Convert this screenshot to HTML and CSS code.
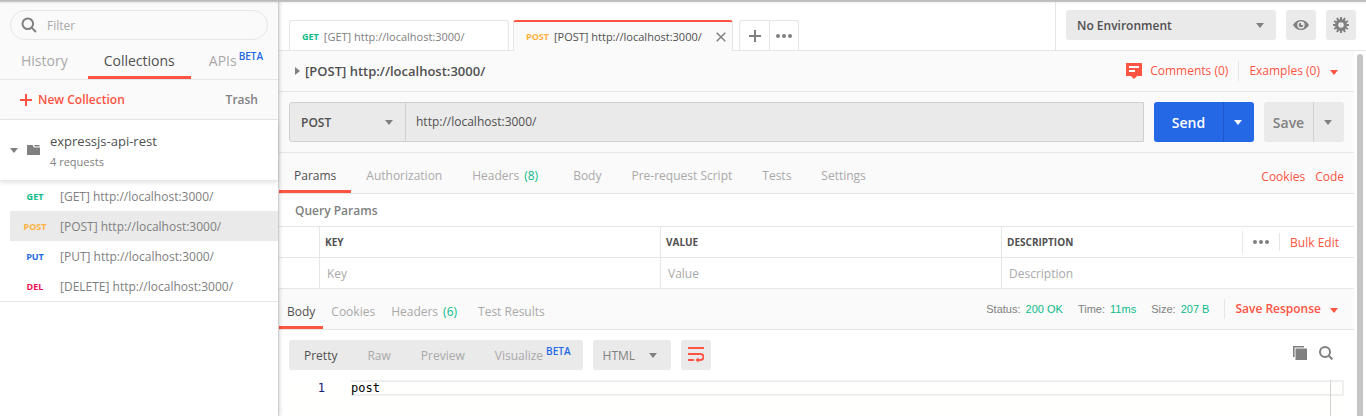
FILE: index.html
```html
<!DOCTYPE html>
<html lang="en">
<head>
<meta charset="utf-8">
<title>[POST] http://localhost:3000/</title>
<link rel="stylesheet" href="styles.css">
</head>
<body>
<div class="app">
  <aside class="sidebar">
    <div class="sidebar-top">
      <label class="filter">
        <svg class="icon" width="16" height="16" viewBox="0 0 16 16" fill="none" stroke="#808080" stroke-width="2"><circle cx="6.8" cy="6.8" r="5.3"/><path d="M10.6 10.6 15 15"/></svg>
        <input type="text" placeholder="Filter" aria-label="Filter">
      </label>
      <nav class="side-tabs">
        <button class="side-tab">History</button>
        <button class="side-tab active">Collections</button>
        <button class="side-tab">APIs<span class="beta">BETA</span></button>
      </nav>
      <div class="side-actions">
        <button class="new-collection">
          <svg width="12" height="12" viewBox="0 0 12 12" stroke="#ff5442" stroke-width="2"><path d="M6 0V12M0 6H12"/></svg>
          New Collection
        </button>
        <button class="trash">Trash</button>
      </div>
    </div>
    <div class="collection">
      <span class="caret"></span>
      <svg class="folder" width="13" height="10" viewBox="0 0 13 10"><path fill="#808080" d="M0 0H5.5L7 2.5H13V10H0Z"/><path fill="#808080" d="M7 0H12.5V1.5H8Z"/></svg>
      <div class="collection-text">
        <div class="collection-name">expressjs-api-rest</div>
        <div class="collection-count">4 requests</div>
      </div>
    </div>
    <ul class="requests">
      <li><a class="request" href="#get"><span class="method get">GET</span><span>[GET] http://localhost:3000/</span></a></li>
      <li><a class="request selected" href="#post"><span class="method post">POST</span><span>[POST] http://localhost:3000/</span></a></li>
      <li><a class="request" href="#put"><span class="method put">PUT</span><span>[PUT] http://localhost:3000/</span></a></li>
      <li><a class="request" href="#delete"><span class="method del">DEL</span><span>[DELETE] http://localhost:3000/</span></a></li>
    </ul>
  </aside>

  <main class="main">
    <header class="header">
      <div class="doc-tabs">
        <button class="doc-tab"><span class="method get">GET</span>[GET] http://localhost:3000/</button>
        <div class="doc-tab active">
          <span class="method post">POST</span><span class="doc-name">[POST] http://localhost:3000/</span>
          <button class="close" aria-label="Close tab"><svg width="10" height="10" viewBox="0 0 10 10" stroke="#808080" stroke-width="1.5"><path d="M.7 .7 9.3 9.3M9.3 .7.7 9.3"/></svg></button>
        </div>
        <div class="tab-buttons">
          <button aria-label="New tab"><svg width="12" height="12" viewBox="0 0 12 12" stroke="#808080" stroke-width="2"><path d="M6 0V12M0 6H12"/></svg></button>
          <button aria-label="Tab options"><svg width="16" height="4" viewBox="0 0 16 4" fill="#808080"><circle cx="2" cy="2" r="2"/><circle cx="8" cy="2" r="2"/><circle cx="14" cy="2" r="2"/></svg></button>
        </div>
      </div>
      <div class="environment">
        <div class="select env-select">
          <select aria-label="Environment"><option>No Environment</option></select>
        </div>
        <button class="icon-button" aria-label="Environment quick look"><svg width="16" height="10" viewBox="0 0 16 10"><path fill="#808080" fill-rule="evenodd" d="M0 5Q3 0 8 0T16 5Q13 10 8 10T0 5ZM8 1.3A3.7 3.7 0 1 0 8 8.7 3.7 3.7 0 1 0 8 1.3Z"/><path fill="#808080" d="M8 2.7A2.3 2.3 0 1 0 10.3 5H8Z"/></svg></button>
        <button class="icon-button" aria-label="Manage environments"><svg width="16" height="16" viewBox="0 0 16 16" fill="none" stroke="#808080"><circle cx="8" cy="8" r="4.4" stroke-width="3.2"/><path stroke-width="2" d="M8 0V3M8 13V16M0 8H3M13 8H16M4 1.07 5.5 3.67M10.5 12.33 12 14.93M1.07 4 3.67 5.5M12.33 10.5 14.93 12M1.07 12 3.67 10.5M12.33 5.5 14.93 4M4 14.93 5.5 12.33M10.5 3.67 12 1.07"/></svg></button>
      </div>
    </header>

    <div class="workspace">
      <div class="content">
        <section class="title-row">
          <button class="request-title"><span class="caret right"></span>[POST] http://localhost:3000/</button>
          <div class="title-links">
            <button class="link comments"><svg width="16" height="16" viewBox="0 0 16 16"><path fill="#ff5442" d="M0 0H16V13H11L8 16 5 13H0Z"/><path stroke="#fff" stroke-width="2" d="M3 4H13M3 8H9"/></svg>Comments (0)</button>
            <button class="link examples">Examples (0)<span class="caret red"></span></button>
          </div>
        </section>

        <section class="builder">
          <div class="url-group">
            <div class="select method-select"><select aria-label="Method"><option>POST</option></select></div>
            <input class="url" type="text" aria-label="Request URL" value="http://localhost:3000/">
          </div>
          <div class="split send"><button class="split-main">Send</button><button class="split-more" aria-label="Send options"><span class="caret"></span></button></div>
          <div class="split save"><button class="split-main">Save</button><button class="split-more" aria-label="Save options"><span class="caret"></span></button></div>
        </section>

        <section class="tab-row">
          <nav class="tabs">
            <button class="tab active">Params</button>
            <button class="tab">Authorization</button>
            <button class="tab">Headers<span class="count">(8)</span></button>
            <button class="tab">Body</button>
            <button class="tab">Pre-request Script</button>
            <button class="tab">Tests</button>
            <button class="tab">Settings</button>
          </nav>
          <div class="row-links"><button class="link">Cookies</button><button class="link">Code</button></div>
        </section>

        <h2 class="params-title">Query Params</h2>
        <table class="params">
          <colgroup><col class="col-check"><col class="col-key"><col class="col-key"><col></colgroup>
          <thead>
            <tr>
              <th></th><th>KEY</th><th>VALUE</th>
              <th><div class="desc-head"><span>DESCRIPTION</span>
                <button class="more" aria-label="More columns"><svg width="16" height="4" viewBox="0 0 16 4" fill="#808080"><circle cx="2" cy="2" r="2"/><circle cx="8" cy="2" r="2"/><circle cx="14" cy="2" r="2"/></svg></button>
                <button class="link bulk">Bulk Edit</button></div></th>
            </tr>
          </thead>
          <tbody>
            <tr>
              <td></td>
              <td><input type="text" placeholder="Key" aria-label="Key"></td>
              <td><input type="text" placeholder="Value" aria-label="Value"></td>
              <td><input type="text" placeholder="Description" aria-label="Description"></td>
            </tr>
          </tbody>
        </table>

        <section class="tab-row response">
          <nav class="tabs">
            <button class="tab active">Body</button>
            <button class="tab">Cookies</button>
            <button class="tab">Headers<span class="count">(6)</span></button>
            <button class="tab">Test Results</button>
          </nav>
          <div class="response-info">
            <span class="stat">Status: <b>200 OK</b></span>
            <span class="stat">Time: <b>11ms</b></span>
            <span class="stat">Size: <b>207 B</b></span>
            <button class="link save-response">Save Response<span class="caret red"></span></button>
          </div>
        </section>

        <section class="toolbar">
          <div class="view-modes">
            <button class="mode active">Pretty</button>
            <button class="mode">Raw</button>
            <button class="mode">Preview</button>
            <button class="mode">Visualize<span class="beta">BETA</span></button>
          </div>
          <div class="select lang-select"><select aria-label="Language"><option>HTML</option></select></div>
          <button class="icon-button" aria-label="Wrap lines"><svg width="16" height="16" viewBox="0 0 16 16" fill="none" stroke="#ff5442" stroke-width="2"><path d="M0 1H16M0 7H12.5A2.9 2.9 0 0 1 12.5 13H9M0 13H6"/><path fill="#ff5442" stroke="none" d="M7.5 13 10.5 10.2V15.8Z"/></svg></button>
          <div class="tools">
            <button aria-label="Copy"><svg width="14" height="14" viewBox="0 0 14 14"><path fill="#808080" d="M2.5 2.5H14V14H2.5Z"/><path fill="none" stroke="#808080" stroke-width="1.6" d="M.8 11V.8H11"/></svg></button>
            <button aria-label="Search"><svg width="14" height="14" viewBox="0 0 14 14" fill="none" stroke="#808080" stroke-width="2"><circle cx="6" cy="6" r="5"/><path d="M9.5 9.5 13.4 13.4"/></svg></button>
          </div>
        </section>

        <section class="editor">
          <div class="line"><span class="line-number">1</span><code class="code">post</code></div>
          <div class="ruler"></div>
        </section>
      </div>
      <div class="scroll-rail"><div class="scroll-thumb"></div></div>
    </div>
  </main>
</div>
</body>
</html>
```
FILE: styles.css
```css
* { box-sizing: border-box; }

body {
  margin: 0;
  background: #fff;
  color: #505050;
  font: 12px/16px "Open Sans", "Noto Sans", sans-serif;
}

button, input, select {
  margin: 0;
  padding: 0;
  border: 0;
  background: none;
  color: inherit;
  font: inherit;
  outline: 0;
}

button { display: flex; align-items: center; white-space: nowrap; }
svg { display: block; flex: none; }
a { color: inherit; text-decoration: none; }
::placeholder { color: #a9a9a9; opacity: 1; }

.app { position: relative; display: flex; min-height: 100vh; }
.app::before {
  content: "";
  position: absolute;
  inset: 0 0 auto;
  z-index: 3;
  height: 4px;
  background: linear-gradient(#bcbcbc 0 1px, #c4c4c4 1px 2px, rgba(0, 0, 0, .07) 2px, transparent);
}

.caret {
  flex: none;
  border: 4px solid transparent;
  border-top: 5px solid #808080;
  border-bottom: 0;
}
.caret.right { border: 4px solid transparent; border-left: 5px solid #808080; border-right: 0; }
.caret.red { margin-top: 2px; border-top-color: #ff5442; }

.method { flex: none; font-size: 9px; font-weight: 700; }
.get { color: #0cbb8a; }
.post { color: #ffb13b; }
.put { color: #2468e6; }
.del { color: #ed0f55; }

.beta { align-self: flex-start; color: #2468e6; font-size: 10px; font-weight: 600; line-height: 14px; margin-left: 3px; }
.link { color: #ff5442; }

/* Sidebar */
.sidebar {
  position: relative;
  z-index: 2;
  flex: none;
  width: 279px;
  background: #fff;
  border-right: 1px solid #cfcfcf;
  box-shadow: 0 0 4px rgba(0, 0, 0, .25);
}
.sidebar-top { padding-top: 10px; background: #fafafa; }
.filter {
  display: flex;
  align-items: center;
  gap: 10px;
  height: 30px;
  margin: 0 10px;
  padding: 0 10px;
  border: 1px solid #e6e6e6;
  border-radius: 15px;
}
.filter input { flex: 1; min-width: 0; padding-top: 2px; }
.side-tabs { display: flex; height: 40px; padding-left: 6px; border-bottom: 1px solid #e6e6e6; }
.side-tab {
  height: 39px;
  padding: 5px 15px 0;
  border-bottom: 3px solid transparent;
  color: #a9a9a9;
  font-size: 14px;
}
.side-tab + .side-tab { margin-left: 5px; }
.side-tab:last-child { margin-left: 3px; }
.side-tab .beta { margin: 4px 0 0 2px; }
.side-tab.active { padding: 5px 16px 0; color: #505050; border-color: #ff5442; }
.side-actions {
  display: flex;
  align-items: center;
  justify-content: space-between;
  height: 40px;
  padding: 0 20px;
  border-bottom: 1px solid #e6e6e6;
  font-weight: 600;
}
.new-collection { gap: 6px; color: #ff5442; }
.trash { color: #808080; }

.collection {
  display: flex;
  align-items: center;
  height: 61px;
  padding-left: 10px;
  border-bottom: 1px solid #e6e6e6;
  box-shadow: 0 2px 4px rgba(0, 0, 0, .1);
}
.folder { margin: 0 10px 0 9px; }
.collection-text { padding-top: 4px; }
.collection-name { font-size: 13px; line-height: 20px; }
.collection-count { color: #808080; font-size: 11px; line-height: 22px; }

.requests { margin: 0; padding: 0; list-style: none; border-bottom: 1px solid #e6e6e6; }
.request { display: flex; align-items: center; height: 30px; margin-left: 10px; padding-top: 2px; color: #808080; }
.request.selected { background: #eaeaea; }
.request .method { width: 50px; text-align: center; }

/* Header */
.main { display: flex; flex: 1; flex-direction: column; min-width: 0; }
.header {
  display: flex;
  justify-content: space-between;
  height: 51px;
  border-bottom: 1px solid #e6e6e6;
}
.doc-tabs { display: flex; align-items: flex-end; padding-left: 10px; }
.doc-tab {
  display: flex;
  align-items: center;
  gap: 5px;
  width: 220px;
  height: 30px;
  padding: 2px 12px 0;
  border: 1px solid #e6e6e6;
  border-bottom: 0;
  border-radius: 3px 3px 0 0;
  color: #808080;
  font-size: 11px;
}
.doc-tab.active {
  height: 31px;
  margin: 0 6px -1px 4px;
  padding: 0 6px 0 12px;
  border-top: 2px solid #ff5442;
  background: #fafafa;
  color: #505050;
}
.doc-name { flex: 1; }
.close { height: 30px; }
.tab-buttons { display: flex; border: 1px solid #e6e6e6; border-bottom: 0; border-radius: 3px 3px 0 0; }
.tab-buttons button { justify-content: center; width: 29px; height: 29px; }
.tab-buttons button + button { border-left: 1px solid #e6e6e6; }
.environment { display: flex; gap: 10px; padding: 10px; border-left: 1px solid #e6e6e6; }
.icon-button { justify-content: center; width: 30px; height: 30px; border-radius: 3px; background: #eaeaea; }

.select { position: relative; flex: none; }
.select select { width: 100%; height: 100%; padding: 2px 11px 0; appearance: none; }
.select::after {
  content: "";
  position: absolute;
  top: calc(50% - 2px);
  right: 12px;
  border: 4px solid transparent;
  border-top: 5px solid #808080;
  border-bottom: 0;
  pointer-events: none;
}
.env-select { width: 210px; height: 30px; border-radius: 3px; background: #eaeaea; font-weight: 600; }

/* Workspace */
.workspace { display: flex; flex: 1; }
.content { display: flex; flex: 1; flex-direction: column; min-width: 0; }
.scroll-rail { flex: none; width: 12px; padding: 3px 3px 0; background: #fff; }
.scroll-thumb { height: 100%; border-radius: 3px 3px 0 0; background: #c4c4c4; }

.title-row {
  display: flex;
  align-items: center;
  justify-content: space-between;
  height: 41px;
  padding: 0 16px;
  border-bottom: 1px solid #e6e6e6;
  background: #fafafa;
}
.request-title { gap: 5px; font-size: 13px; font-weight: 600; }
.title-links { display: flex; }
.comments { gap: 8px; }
.examples { gap: 10px; height: 20px; margin-left: 10px; padding-left: 10px; border-left: 1px solid #e6e6e6; }

.builder {
  display: flex;
  gap: 10px;
  padding: 10px;
  border-bottom: 1px solid #e6e6e6;
  background: #fafafa;
}
.url-group {
  display: flex;
  flex: 1;
  height: 40px;
  border: 1px solid #d0d0d0;
  border-radius: 3px 0 0 3px;
  background: #eaeaea;
}
.method-select { width: 116px; border-right: 1px solid #d0d0d0; font-weight: 600; }
.url { flex: 1; min-width: 0; padding: 0 10px; }
.split { display: flex; height: 40px; border-radius: 3px; font-size: 14px; font-weight: 600; }
.split button { justify-content: center; height: 40px; }
.split-main { flex: 1; padding-top: 2px; }
.split-more { width: 31px; padding-right: 2px; border-left: 1px solid #d0d0d0; }
.send { width: 100px; background: #2468e6; color: #fff; }
.send .split-more { border-color: #1f58c7; }
.send .caret { border-top-color: #fff; }
.save { width: 80px; background: #eaeaea; color: #808080; }

.tab-row {
  display: flex;
  justify-content: space-between;
  height: 41px;
  padding-right: 10px;
  border-bottom: 1px solid #e6e6e6;
  background: #fafafa;
}
.tabs { display: flex; }
.tab { height: 40px; padding: 9px 15px 0; border-bottom: 3px solid transparent; color: #a9a9a9; }
.tab.active { color: #505050; border-color: #ff5442; }
.count { margin: 0 5px; color: #0cbb8a; }
.row-links { display: flex; gap: 10px; padding-top: 8px; }

.params-title { margin: 0; padding: 2px 16px 0; color: #808080; font-size: 12px; font-weight: 600; line-height: 30px; }
.params { width: 100%; table-layout: fixed; border-spacing: 0; }
.col-check { width: 41px; }
.col-key { width: 341px; }
.params th, .params td { height: 31px; padding: 0; border-top: 1px solid #e6e6e6; border-right: 1px solid #e6e6e6; }
.params th:last-child, .params td:last-child { border-right: 0; }
.params th { padding-left: 5px; font-size: 10px; font-weight: 700; text-align: left; }
.params input { display: block; width: 100%; height: 30px; padding: 0 7px; }
.desc-head { display: flex; align-items: center; }
.more { height: 22px; margin-left: auto; padding: 0 10px; border-left: 1px solid #e6e6e6; }
.bulk { height: 18px; padding: 2px 15px 0 10px; border-left: 1px solid #e6e6e6; font-size: 12px; font-weight: 400; }

.response { height: 42px; border-top: 1px solid #e6e6e6; padding-right: 16px; }
.response .tab { padding: 8px 8px 0; }
.response-info { display: flex; gap: 15px; align-items: center; color: #808080; }
.stat { font: 11px/16px "Liberation Sans", Arial, sans-serif; }
.stat b { margin-left: 2px; color: #0cbb8a; font-weight: 400; }
.save-response { gap: 9px; height: 20px; padding-left: 10px; border-left: 1px solid #e6e6e6; font-weight: 600; }

.toolbar { display: flex; gap: 10px; padding: 10px; }
.view-modes { display: flex; padding-right: 12px; border-radius: 3px; background: #eaeaea; }
.mode { height: 30px; padding: 2px 0 0 15px; color: #a9a9a9; }
.mode + .mode { margin-left: 15px; }
.mode.active { color: #505050; }
.mode .beta { margin-top: 2px; }
.lang-select { width: 78px; height: 30px; border-radius: 3px; background: #eaeaea; color: #808080; }
.lang-select select { padding: 2px 10px 0; }
.lang-select::after { right: 14px; }
.tools { display: flex; gap: 12px; height: 26px; margin-left: auto; padding-right: 11px; }

.editor {
  position: relative;
  flex: 1;
  margin: 0 10px;
  background: #fffffe;
  font: 12px/12px "DejaVu Sans Mono", monospace;
}
.line { display: flex; }
.line-number { width: 36px; margin-right: 26px; padding-top: 2px; color: #0b216f; text-align: right; }
.code { flex: 1; border: 2px solid #eee; border-left: 0; color: #000; font: inherit; }
.ruler { position: absolute; top: 0; right: 0; bottom: 0; width: 14px; border-left: 1px solid #d3d3d3; }
```
